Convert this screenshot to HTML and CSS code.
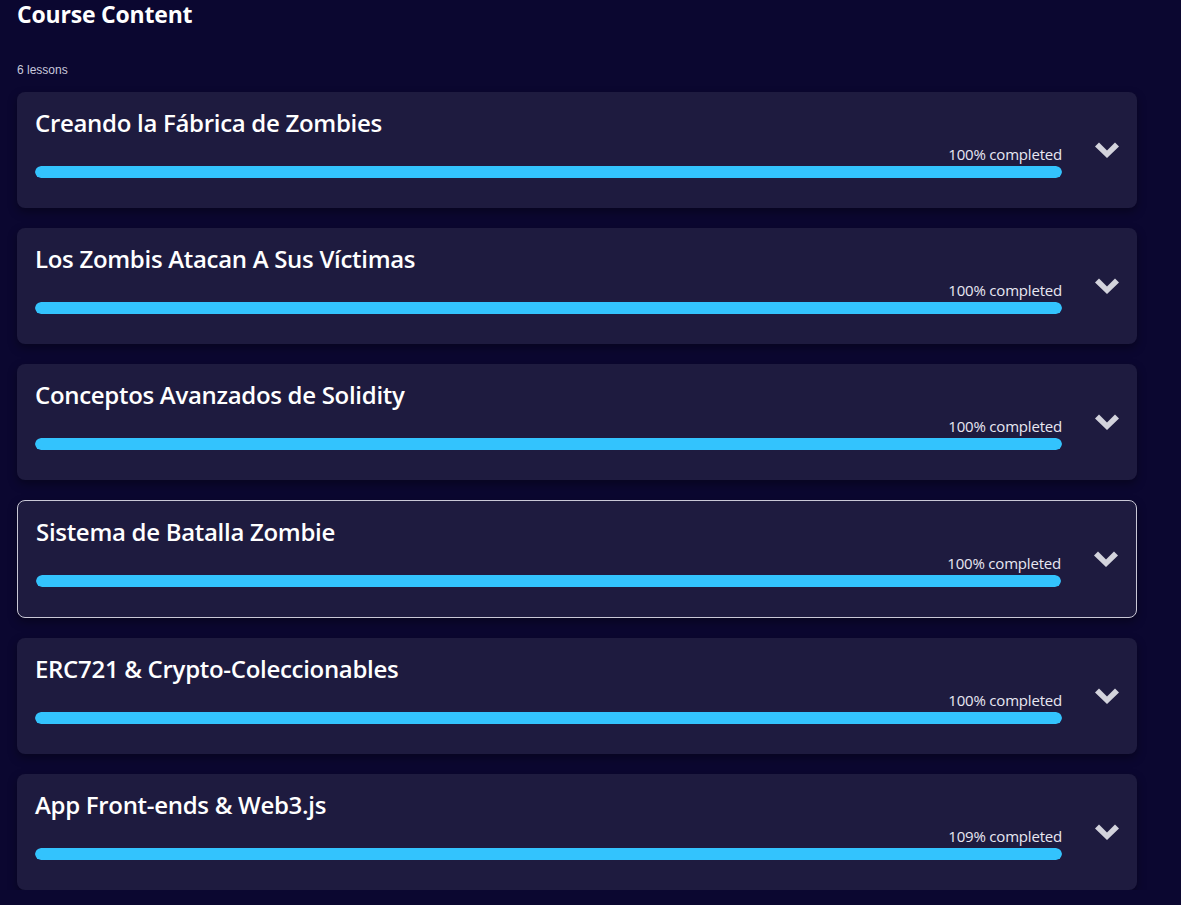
FILE: index.html
```html
<!DOCTYPE html>
<html>
<head>
<meta charset="utf-8">
<link rel="stylesheet" href="styles.css">
</head>
<body>
<main class="course">
  <h2 class="course-title">Course Content</h2>
  <p class="lesson-count">6 lessons</p>
  <ul class="lessons">
    <li class="lesson">
      <div class="lesson-main">
        <h3 class="lesson-name">Creando la Fábrica de Zombies</h3>
        <div class="progress-label">100% completed</div>
        <div class="bar"><div class="bar-fill"></div></div>
      </div>
      <svg class="chevron" viewBox="0 0 24 16" width="24" height="16"><polygon points="0,4.5 4,0.5 12,8.5 20,0.5 24,4.5 12,16" /></svg>
    </li>
    <li class="lesson">
      <div class="lesson-main">
        <h3 class="lesson-name">Los Zombis Atacan A Sus Víctimas</h3>
        <div class="progress-label">100% completed</div>
        <div class="bar"><div class="bar-fill"></div></div>
      </div>
      <svg class="chevron" viewBox="0 0 24 16" width="24" height="16"><polygon points="0,4.5 4,0.5 12,8.5 20,0.5 24,4.5 12,16" /></svg>
    </li>
    <li class="lesson">
      <div class="lesson-main">
        <h3 class="lesson-name">Conceptos Avanzados de Solidity</h3>
        <div class="progress-label">100% completed</div>
        <div class="bar"><div class="bar-fill"></div></div>
      </div>
      <svg class="chevron" viewBox="0 0 24 16" width="24" height="16"><polygon points="0,4.5 4,0.5 12,8.5 20,0.5 24,4.5 12,16" /></svg>
    </li>
    <li class="lesson lesson-active">
      <div class="lesson-main">
        <h3 class="lesson-name">Sistema de Batalla Zombie</h3>
        <div class="progress-label">100% completed</div>
        <div class="bar"><div class="bar-fill"></div></div>
      </div>
      <svg class="chevron" viewBox="0 0 24 16" width="24" height="16"><polygon points="0,4.5 4,0.5 12,8.5 20,0.5 24,4.5 12,16" /></svg>
    </li>
    <li class="lesson">
      <div class="lesson-main">
        <h3 class="lesson-name">ERC721 &amp; Crypto-Coleccionables</h3>
        <div class="progress-label">100% completed</div>
        <div class="bar"><div class="bar-fill"></div></div>
      </div>
      <svg class="chevron" viewBox="0 0 24 16" width="24" height="16"><polygon points="0,4.5 4,0.5 12,8.5 20,0.5 24,4.5 12,16" /></svg>
    </li>
    <li class="lesson">
      <div class="lesson-main">
        <h3 class="lesson-name">App Front-ends &amp; Web3.js</h3>
        <div class="progress-label">109% completed</div>
        <div class="bar"><div class="bar-fill"></div></div>
      </div>
      <svg class="chevron" viewBox="0 0 24 16" width="24" height="16"><polygon points="0,4.5 4,0.5 12,8.5 20,0.5 24,4.5 12,16" /></svg>
    </li>
  </ul>
</main>
</body>
</html>
```
FILE: styles.css
```css
html, body {
  margin: 0;
  padding: 0;
  background: #0b0730;
  color: #ffffff;
  font-family: "Open Sans", "Noto Sans", sans-serif;
}

.course {
  padding: 0 44px 0 17px;
}

.course-title {
  margin: 0;
  padding-top: 1px;
  font-size: 23px;
  line-height: 27px;
  font-weight: 700;
  letter-spacing: -0.2px;
}

.lesson-count {
  margin: 35px 0 0;
  font-family: "Liberation Sans", Arial, sans-serif;
  font-size: 12px;
  line-height: 15px;
  color: #c9c8dc;
}

.lessons {
  list-style: none;
  margin: 14px 0 0;
  padding: 0;
  display: flex;
  flex-direction: column;
  gap: 20px;
}

.lesson {
  display: flex;
  align-items: center;
  gap: 33px;
  background: #1e1b3f;
  border-radius: 8px;
  padding: 17px 18px 30px 18px;
  box-shadow: 0 4px 10px rgba(0, 0, 0, 0.35);
}

.lesson-active {
  border: 1px solid #c9c8d6;
}

.lesson-main {
  flex: 1;
  display: flex;
  flex-direction: column;
}

.lesson-name {
  margin: 0;
  font-size: 24px;
  line-height: 28px;
  font-weight: 600;
  letter-spacing: -0.3px;
}

.progress-label {
  margin-top: 8px;
  align-self: flex-end;
  font-size: 15px;
  line-height: 18px;
  color: #e8e7f2;
  letter-spacing: -0.2px;
}

.bar {
  margin-top: 3px;
  height: 12px;
  border-radius: 6px;
  background: #2a2750;
  overflow: hidden;
}

.bar-fill {
  width: 100%;
  height: 100%;
  background: #33c3fd;
  border-radius: 6px;
}

.chevron {
  flex: none;
  margin-top: 12px;
  fill: #d3d3dc;
}
```
